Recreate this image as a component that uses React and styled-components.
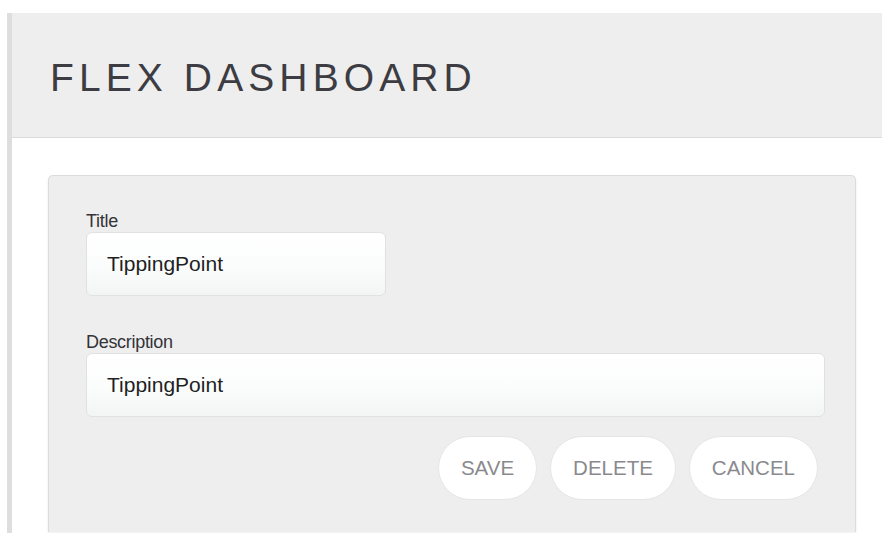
import styled, { createGlobalStyle } from "styled-components";

const GlobalStyle = createGlobalStyle`
  html, body {
    margin: 0;
    padding: 0;
    background: #ffffff;
    overflow: hidden;
    font-family: "Liberation Sans", Arial, Helvetica, sans-serif;
  }
`;

const Page = styled.div`
  padding: 13px 0 0 7px;
`;

const Main = styled.div`
  border-left: 5px solid #dedede;
  min-height: calc(100vh - 13px);
`;

const Header = styled.header`
  box-sizing: border-box;
  height: 125px;
  background: #eeeeee;
  border-bottom: 1px solid #dadada;
  display: flex;
  align-items: center;
  padding: 5px 0 0 38px;
`;

const Heading = styled.h1`
  margin: 0;
  font-size: 39px;
  line-height: 1;
  font-weight: 400;
  letter-spacing: 5.1px;
  color: #3c3c42;
`;

const Content = styled.div`
  padding: 37px 26px 0 36px;
`;

const Card = styled.div`
  background: #eeeeee;
  border: 1px solid #dcdcdc;
  border-bottom: none;
  border-radius: 5px 5px 0 0;
  box-shadow: 0 1px 3px rgba(0, 0, 0, 0.08);
  padding: 35px 30px 32px 37px;
`;

const Field = styled.div`
  display: flex;
  flex-direction: column;
  align-items: flex-start;
  margin-bottom: ${(p) => (p.$last ? "0" : "36px")};
`;

const Label = styled.label`
  font-size: 18px;
  line-height: 20px;
  color: #333338;
  margin-bottom: 1px;
  letter-spacing: -0.3px;
`;

const Input = styled.input`
  box-sizing: border-box;
  width: ${(p) => p.$width || "100%"};
  height: 64px;
  padding: 0 20px;
  border: 1px solid #e1e1e1;
  border-radius: 6px;
  background: linear-gradient(to bottom, #ffffff 0%, #fbfcfc 55%, #f3f5f5 100%);
  font-family: inherit;
  font-size: 21px;
  color: #1f1f24;
  outline: none;
`;

const Actions = styled.div`
  display: flex;
  justify-content: flex-end;
  gap: 13px;
  margin-top: 19px;
  padding-right: 7px;
`;

const Button = styled.button`
  height: 64px;
  padding: 0 22px;
  border: 1px solid #e6e6e6;
  border-radius: 32px;
  background: #ffffff;
  font-family: inherit;
  font-size: 20.5px;
  color: #8a8a8e;
  text-transform: uppercase;
  cursor: pointer;
`;

export default function App() {
  return (
    <Page>
      <GlobalStyle />
      <Main>
        <Header>
          <Heading>FLEX DASHBOARD</Heading>
        </Header>
        <Content>
          <Card>
            <Field>
              <Label>Title</Label>
              <Input $width="300px" defaultValue="TippingPoint" />
            </Field>
            <Field $last>
              <Label>Description</Label>
              <Input defaultValue="TippingPoint" />
            </Field>
            <Actions>
              <Button>Save</Button>
              <Button>Delete</Button>
              <Button>Cancel</Button>
            </Actions>
          </Card>
        </Content>
      </Main>
    </Page>
  );
}
